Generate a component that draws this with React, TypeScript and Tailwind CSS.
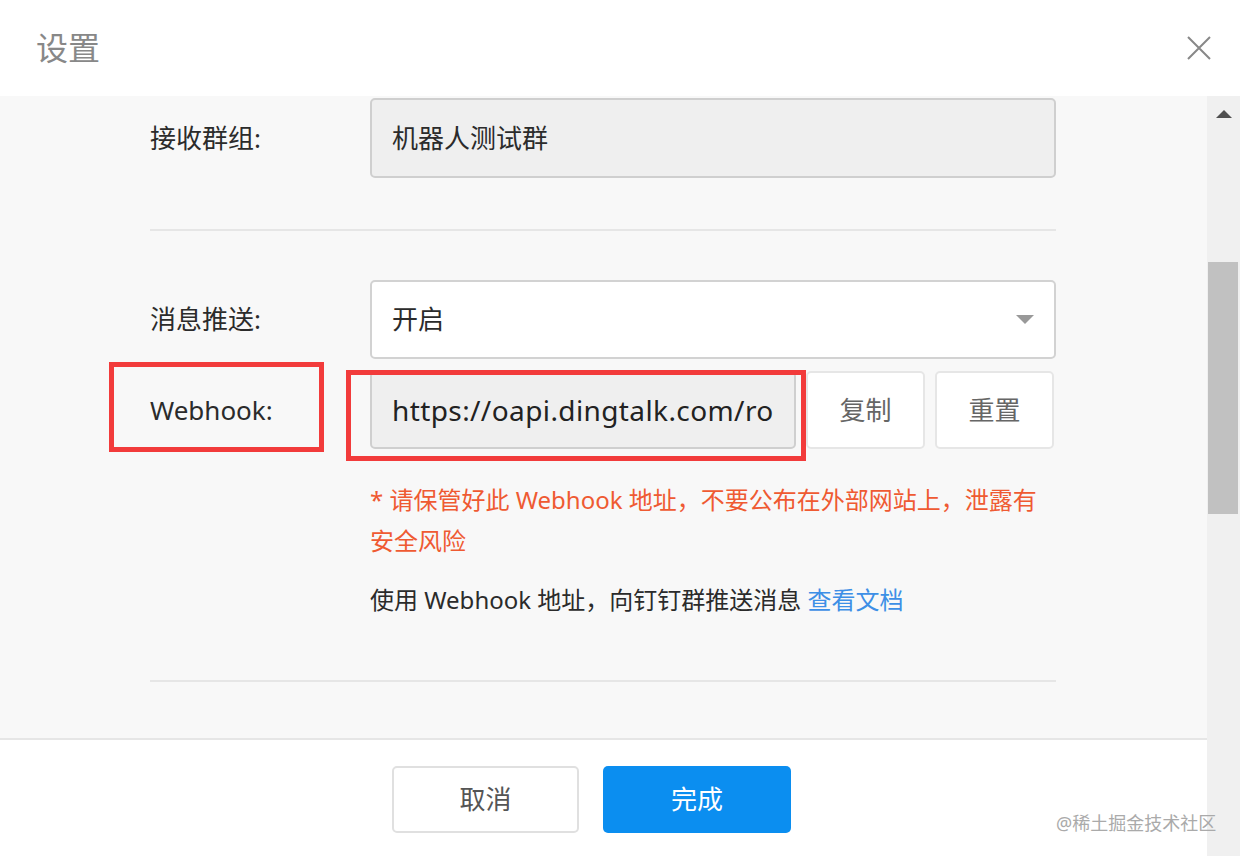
import React from 'react';

const font = { fontFamily: '"Noto Sans", "Noto Sans CJK SC", sans-serif' };

function Row({ label, children }: { label: string; children: React.ReactNode }) {
  return (
    <div className="flex items-center">
      <div className="w-[220px] shrink-0 text-[26px] text-[#2b2b2b]">{label}</div>
      <div className="w-[686px]">{children}</div>
    </div>
  );
}

export default function App() {
  return (
    <div className="relative flex h-[856px] w-[1240px] flex-col overflow-hidden bg-white" style={font}>
      {/* header */}
      <div className="flex h-[96px] shrink-0 items-center justify-between pl-[36px] pr-[28px]">
        <span className="text-[32px] leading-none text-[#888]">设置</span>
        <svg width="26" height="26" viewBox="0 0 26 26" className="text-[#888]">
          <path d="M2 2 L24 24 M24 2 L2 24" stroke="currentColor" strokeWidth="2" fill="none" />
        </svg>
      </div>

      <div className="flex min-h-0 flex-1">
        <div className="flex min-w-0 flex-1 flex-col">
          {/* body */}
          <div className="relative h-[642px] shrink-0 bg-[#f8f8f8] pl-[150px] pt-[2px]">
            <Row label="接收群组:">
              <div className="flex h-[80px] items-center rounded-[5px] border-2 border-[#cfcfcf] bg-[#efefef] px-[20px] text-[26px] text-[#2b2b2b]">
                机器人测试群
              </div>
            </Row>
            <div className="mt-[51px] h-[2px] w-[906px] bg-[#e6e6e6]" />
            <div className="mt-[49px]">
              <Row label="消息推送:">
                <div className="flex h-[79px] items-center justify-between rounded-[5px] border-2 border-[#d2d2d2] bg-white pl-[20px] pr-[20px] text-[26px] text-[#2b2b2b]">
                  <span>开启</span>
                  <svg width="18" height="9" viewBox="0 0 18 9">
                    <path d="M0 0 H18 L9 9 Z" fill="#999" />
                  </svg>
                </div>
              </Row>
            </div>
            <div className="mt-[12px]">
              <Row label="Webhook:">
                <div className="flex gap-[10px]">
                  <div className="flex h-[78px] w-[426px] items-center rounded-[5px] border-2 border-[#cfcfcf] bg-[#efefef] pl-[20px] pr-[20px] text-[28px] tracking-[0.4px] text-[#222]">
                    <span className="block w-full overflow-hidden whitespace-nowrap">https://oapi.dingtalk.com/robot</span>
                  </div>
                  <button className="h-[78px] w-[119px] rounded-[5px] border-2 border-[#e6e6e6] bg-white text-[26px] text-[#666]">复制</button>
                  <button className="h-[78px] w-[119px] rounded-[5px] border-2 border-[#e6e6e6] bg-white text-[26px] text-[#666]">重置</button>
                </div>
              </Row>
            </div>
            <div className="ml-[220px] mt-[30px] w-[686px] text-[24px] leading-[41px] text-[#ef5a32]">
              * 请保管好此 Webhook 地址，不要公布在外部网站上，泄露有
              <br />
              安全风险
            </div>
            <div className="ml-[220px] mt-[18px] text-[24px] leading-[41px] text-[#2b2b2b]">
              使用 Webhook 地址，向钉钉群推送消息 <span className="text-[#3d8fe6]">查看文档</span>
            </div>
            <div className="mt-[60px] h-[2px] w-[906px] bg-[#e6e6e6]" />

            {/* red annotation boxes */}
            <div className="absolute left-[109px] top-[266px] h-[90px] w-[215px] border-[5px] border-[#f23b3b]" />
            <div className="absolute left-[346px] top-[274px] h-[91px] w-[460px] border-[5px] border-[#f23b3b]" />
          </div>

          {/* footer */}
          <div className="flex flex-1 justify-center gap-[24px] border-t-2 border-[#e6e6e6] bg-white pt-[26px]">
            <button className="ml-[-24px] h-[67px] w-[187px] rounded-[5px] border-2 border-[#e0e0e0] bg-white text-[26px] text-[#555]">取消</button>
            <button className="h-[67px] w-[188px] rounded-[5px] bg-[#0b8ef0] text-[26px] text-white">完成</button>
          </div>
        </div>

        {/* scrollbar */}
        <div className="flex w-[33px] shrink-0 flex-col items-center bg-[#f0f0f0] pt-[14px]">
          <svg width="16" height="8" viewBox="0 0 16 8">
            <path d="M0 8 L8 0 L16 8 Z" fill="#505050" />
          </svg>
          <div className="ml-[-2px] mt-[144px] h-[252px] w-[30px] bg-[#c1c1c1]" />
        </div>
      </div>

      <div className="absolute left-[1056px] top-[810px] text-[18px] text-[#aaa]">@稀土掘金技术社区</div>
    </div>
  );
}
